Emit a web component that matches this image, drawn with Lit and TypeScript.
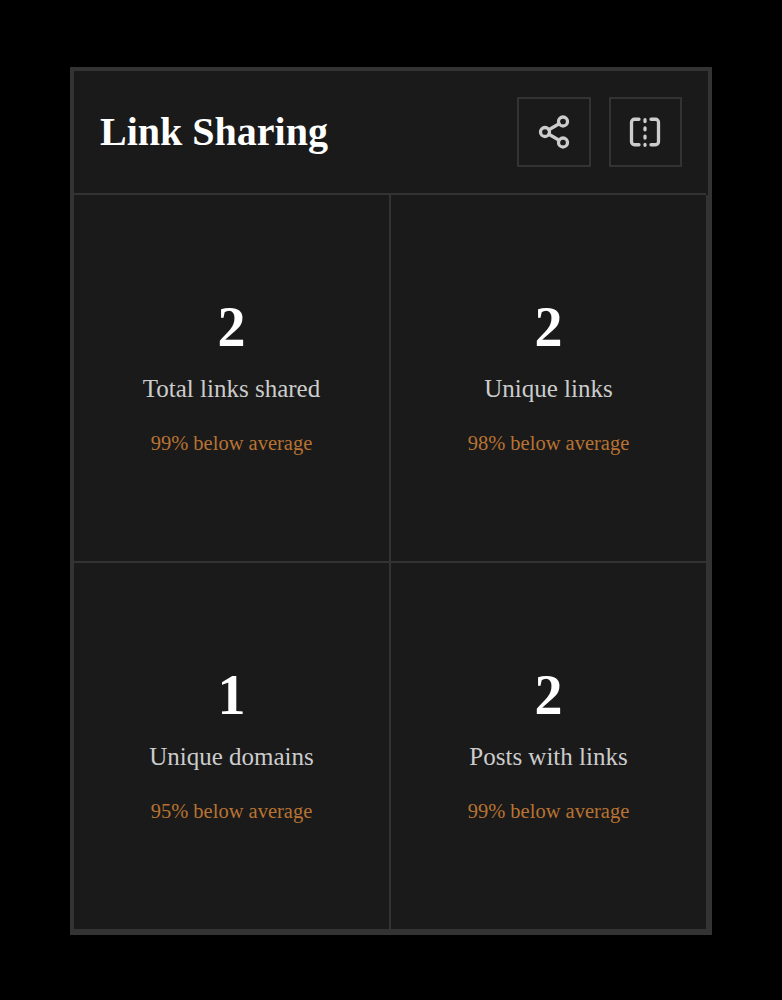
import {LitElement, css, html} from 'lit'
import {customElement} from 'lit/decorators.js'

const stats = [
  {value: '2', label: 'Total links shared', note: '99% below average'},
  {value: '2', label: 'Unique links', note: '98% below average'},
  {value: '1', label: 'Unique domains', note: '95% below average'},
  {value: '2', label: 'Posts with links', note: '99% below average'},
]

@customElement('app-root')
export class AppRoot extends LitElement {

  static styles = css`
    :host {
      display: block;
      background: #000;
      height: 1000px;
      padding: 67px 70px 0;
      box-sizing: border-box;
      font-family: "Liberation Serif", serif;
    }

    .card {
      width: 642px;
      height: 867.5px;
      box-sizing: border-box;
      border: 4px solid #333;
      background: #1a1a1a;
      display: flex;
      flex-direction: column;
    }

    /* the divider stops short of the card border, the grid cells don't */
    .head {
      height: 123.5px;
      margin-right: 2px;
      flex: none;
      box-sizing: border-box;
      border-bottom: 2px solid #333;
      display: flex;
      align-items: center;
      justify-content: space-between;
      padding: 0 24px 0 26px;
    }

    h1 {
      margin: 0;
      font-size: 40px;
      font-weight: 700;
      color: #fff;
    }

    .actions {
      display: flex;
      gap: 18px;
    }

    .btn {
      width: 73.5px;
      height: 69.5px;
      box-sizing: border-box;
      border: 2px solid #333;
      display: flex;
      align-items: center;
      justify-content: center;
    }

    .btn svg {
      width: 36px;
      height: 36px;
      fill: none;
      stroke: #ccc;
      stroke-width: 2.2;
      stroke-linecap: round;
      stroke-linejoin: round;
    }

    .grid {
      flex: 1;
      display: grid;
      grid-template-columns: 317px 317px;
      grid-template-rows: 368px 368px;
    }

    .cell {
      display: flex;
      flex-direction: column;
      align-items: center;
      justify-content: center;
      padding-bottom: 4px;
      border-right: 2px solid #333;
      border-bottom: 2px solid #333;
    }

    .value {
      font-size: 56px;
      font-weight: 700;
      color: #fff;
      line-height: 64px;
      margin-bottom: 4px;
    }

    .label {
      font-size: 25px;
      color: #ccc;
      line-height: 40px;
      margin-top: 6px;
    }

    .note {
      font-size: 20.5px;
      color: #b87333;
      line-height: 28px;
      margin-top: 20px;
    }
  `

  render() {
    return html`
      <div class="card">
        <div class="head">
          <h1>Link Sharing</h1>
          <div class="actions">
            <div class="btn">
              <svg viewBox="0 0 24 24">
                <circle cx="18" cy="5" r="3"></circle>
                <circle cx="6" cy="12" r="3"></circle>
                <circle cx="18" cy="19" r="3"></circle>
                <path d="M8.590 13.510l6.830 3.980M15.410 6.510l-6.820 3.980"></path>
              </svg>
            </div>
            <div class="btn">
              <svg viewBox="0 0 24 24">
                <path d="M8 3.500H5a2 2 0 0 0-2 2v13a2 2 0 0 0 2 2h3"></path>
                <path d="M16 3.500h3a2 2 0 0 1 2 2v13a2 2 0 0 1-2 2h-3"></path>
                <path d="M12 3.800v1.200M12 9.300v1.200M12 14.800v1.200M12 20.300v.6"></path>
              </svg>
            </div>
          </div>
        </div>
        <div class="grid">
          ${stats.map(s => html`
            <div class="cell">
              <div class="value">${s.value}</div>
              <div class="label">${s.label}</div>
              <div class="note">${s.note}</div>
            </div>
          `)}
        </div>
      </div>
    `
  }
}
